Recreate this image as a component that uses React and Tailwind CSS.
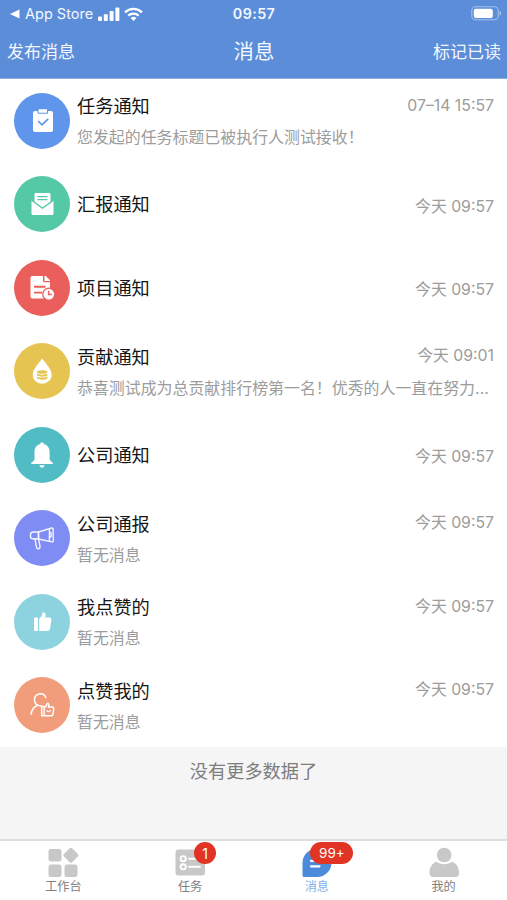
import React, { useState } from 'react';
import clsx from 'clsx';

const TaskIcon = () => (
  <svg width="56" height="56" viewBox="0 0 56 56" fill="none">
    <rect x="19" y="18" width="20" height="21" rx="2" fill="#fff" />
    <rect x="24" y="15.6" width="9.6" height="4.6" rx="1" fill="#fff" stroke="#5f95ea" strokeWidth="1.1" />
    <path d="M24.2 28l3.8 3.8 6.2-6" stroke="#5f95ea" strokeWidth="1.7" />
  </svg>
);

const ReportIcon = () => (
  <svg width="56" height="56" viewBox="0 0 56 56" fill="none">
    <path d="M20.5 26v-7.6c0-.8.6-1.4 1.4-1.4h13.2c.8 0 1.4.6 1.4 1.4V26l-8 5.5z" fill="#fff" />
    <path d="M23.5 20.6h10M23.5 23.6h10" stroke="#55c8a6" strokeWidth="1.3" />
    <path d="M17.5 24.2l11 8 11-8v13.3c0 .8-.7 1.5-1.5 1.5H19c-.8 0-1.5-.7-1.5-1.5z" fill="#fff" />
    <path d="M17.5 24.2l11 8 11-8" stroke="#55c8a6" strokeWidth="1.2" />
  </svg>
);

const ProjectIcon = () => (
  <svg width="56" height="56" viewBox="0 0 56 56" fill="none">
    <path d="M18.5 16H29v4.8c0 .9.6 1.5 1.500 1.500H36v14.200c0 1.100-.9 2-2 2H18.500c-1.100 0-2-.9-2-2V18c0-1.100.9-2 2-2z" fill="#fff" />
    <path d="M30.500 16h1.300l4.200 4.200v.8h-5.500z" fill="#fff" />
    <path d="M20 26.800h11.500M20 32.600h8" stroke="#ea5f5b" strokeWidth="1.900" />
    <circle cx="34.800" cy="34.200" r="6" fill="#fff" stroke="#ea5f5b" strokeWidth="1.300" />
    <path d="M34.600 30.800v3.700h3.200" stroke="#ea5f5b" strokeWidth="1.400" />
  </svg>
);

const ContributionIcon = () => (
  <svg width="56" height="56" viewBox="0 0 56 56" fill="none">
    <path d="M28.200 15.200c1.600 3.600 9.500 10 9.500 16.600 0 5-4.200 8.800-9.500 8.800s-9.500-3.800-9.500-8.800c0-6.600 7.900-13 9.500-16.600z" fill="#fff" />
    <ellipse cx="28.200" cy="29" rx="5.200" ry="1.800" fill="#e6c452" />
    <path d="M23 30.500c1 1.500 9.400 1.500 10.400 0v2.100c-1 1.600-9.400 1.600-10.400 0zM23 33.400c1 1.500 9.400 1.500 10.400 0v2.100c-1 1.600-9.400 1.600-10.400 0z" fill="#e6c452" />
  </svg>
);

const BellIcon = () => (
  <svg width="56" height="56" viewBox="0 0 56 56" fill="#fff">
    <path d="M28 15.200c1.100 0 1.800.8 1.900 1.900 3.600 1 5.700 4 5.700 7.800v6.500c0 2 1.500 3.100 3 4 .7.5.5 1.500-.4 1.500H17.900c-.9 0-1.100-1-.4-1.500 1.500-.9 3-2 3-4v-6.500c0-3.800 2.100-6.800 5.700-7.800.1-1.100.7-1.900 1.800-1.900z" />
    <path d="M25.400 38.200h5.200c-.3 1.500-1.200 2.300-2.600 2.300s-2.300-.8-2.600-2.300z" />
  </svg>
);

const MegaphoneIcon = () => (
  <svg width="56" height="56" viewBox="0 0 56 56" fill="none" stroke="#fff" strokeOpacity=".9" strokeWidth="1.400" strokeLinejoin="round" strokeLinecap="round">
    <path d="M24.500 22L37.500 18c.9-.2 1.500.2 1.600 1l.2 11.600c0 .9-.6 1.400-1.500 1.300l-13.300-2.900z" />
    <path d="M24.500 22h-5.600c-1.500.1-2.400 1.100-2.400 2.500v2c0 1.400 1.100 2.300 2.500 2.300l5.500.2z" />
    <path d="M21 29l1.400 8c.2 1.200 1.100 1.900 2.200 1.700 1.100-.2 1.600-1.200 1.400-2.300L24.600 29M35.400 18.800v12.400" />
    <path d="M35.600 22.300c2.200 0 2.200 5 0 5" />
  </svg>
);

const LikeIcon = () => (
  <svg width="56" height="56" viewBox="0 0 56 56" fill="#fff">
    <rect x="20" y="23.500" width="4" height="13.500" rx="1" />
    <path d="M25.200 24.500c1.900-1.200 2.700-2.500 3-4.500.1-1.100.8-1.800 1.700-1.700 1.600.2 2.300 2 1.300 5.200h4.300c1.300 0 2.100 1.100 1.900 2.500l-1.300 8.600c-.3 1.500-1.100 2.400-2.400 2.400h-8.500z" />
  </svg>
);

const LikedMeIcon = () => (
  <svg width="56" height="56" viewBox="0 0 56 56" fill="none" stroke="#fff" strokeWidth="1.500" strokeLinecap="round" strokeLinejoin="round">
    <path d="M31.800 20.500a5.900 5.900 0 1 0-6 8.200h1.200" />
    <path d="M23.600 28.200c-3.600 1.300-5.800 4.400-6.600 9" />
    <path d="M27.700 29.600h2.500v9.200h-2.500zM30.200 30.400c1.800-.7 2.500-1.700 2.700-3.200.2-1 1.800-.8 2 .5.100.9-.1 1.500-.5 2.300h3.700c1.200 0 1.800.8 1.600 1.900l-.7 5.200c-.2 1.200-.8 1.700-1.800 1.700h-7" />
    <path d="M32.800 33.400c.6 1.800 3.200 1.800 3.700 0" strokeWidth="1.100" />
  </svg>
);

const messages = [
  { id: 1, title: '任务通知', desc: '您发起的任务标题已被执行人测试接收！', time: '07–14 15:57', color: 'bg-[#5f95ea]', icon: TaskIcon },
  { id: 2, title: '汇报通知', time: '今天 09:57', color: 'bg-[#55c8a6]', icon: ReportIcon },
  { id: 3, title: '项目通知', time: '今天 09:57', color: 'bg-[#ea5f5b]', icon: ProjectIcon },
  { id: 4, title: '贡献通知', desc: '恭喜测试成为总贡献排行榜第一名！优秀的人一直在努力...', time: '今天 09:01', color: 'bg-[#e6c452]', icon: ContributionIcon },
  { id: 5, title: '公司通知', time: '今天 09:57', color: 'bg-[#52bcc4]', icon: BellIcon },
  { id: 6, title: '公司通报', desc: '暂无消息', time: '今天 09:57', color: 'bg-[#7f8cf3]', icon: MegaphoneIcon },
  { id: 7, title: '我点赞的', desc: '暂无消息', time: '今天 09:57', color: 'bg-[#8dd2df]', icon: LikeIcon },
  { id: 8, title: '点赞我的', desc: '暂无消息', time: '今天 09:57', color: 'bg-[#f19d7b]', icon: LikedMeIcon }
];

const WorkbenchTab = () => (
  <svg width="32" height="32" viewBox="0 0 32 32" fill="currentColor">
    <rect x="1.500" y="3" width="13" height="12.500" rx="2.500" />
    <rect x="18.100" y="3.500" width="11.600" height="11.600" rx="1.800" transform="rotate(45 23.900 9.300)" />
    <rect x="1.500" y="18.500" width="13" height="12.500" rx="2.500" />
    <rect x="17.500" y="18.500" width="13" height="12.500" rx="2.500" />
  </svg>
);

const TaskTab = () => (
  <svg width="32" height="32" viewBox="0 0 32 32" fill="none">
    <rect x="1.500" y="3.500" width="29.500" height="26" rx="3" fill="currentColor" />
    <g stroke="#fff" strokeWidth="1.900">
      <circle cx="9.200" cy="12.700" r="2.600" />
      <circle cx="9.200" cy="20.800" r="2.600" />
      <path d="M15 12.700h11M15 20.800h11" strokeLinecap="round" />
    </g>
  </svg>
);

const MessageTab = () => (
  <svg width="32" height="32" viewBox="0 0 32 32" fill="none">
    <path d="M16 2.500c8 0 14.500 6.300 14.500 14.200S24 31 16 31H3c-.9 0-1.500-.6-1.500-1.500V16.700C1.500 8.800 8 2.500 16 2.500z" fill="currentColor" />
    <path d="M10 14.800h7M10 20.300h8.500" stroke="#fff" strokeWidth="2.200" strokeLinecap="round" />
  </svg>
);

const MineTab = () => (
  <svg width="32" height="32" viewBox="0 0 32 32" fill="currentColor">
    <circle cx="16.200" cy="9" r="7.300" />
    <path d="M8.300 15.800c4.600 3.100 11.200 3.100 15.800 0 4.400 1.800 7 5.600 7 11.500 0 2.400-1.300 3.700-3.700 3.700H5.200c-2.400 0-3.700-1.300-3.700-3.700 0-5.900 2.500-9.700 6.800-11.500z" />
  </svg>
);

const tabs = [
  { key: 'work', label: '工作台', icon: WorkbenchTab },
  { key: 'task', label: '任务', icon: TaskTab, badge: '1' },
  { key: 'message', label: '消息', icon: MessageTab, badge: '99+' },
  { key: 'mine', label: '我的', icon: MineTab }
];

const StatusBar = () => (
  <div className="grid grid-cols-3 items-center h-[27px] pl-[9px] pr-[5px]">
    <div className="flex items-center">
      <svg className="shrink-0" width="11" height="10" viewBox="0 0 11 10" fill="#fff">
        <path d="M1 5l9.500-4.500v9z" />
      </svg>
      <span className="ml-[5px] text-[14.500px] leading-5 whitespace-nowrap">App Store</span>
      <svg className="ml-[5px] shrink-0" width="22" height="14" viewBox="0 0 22 14" fill="#fff">
        <rect x="0" y="9.500" width="4" height="4.500" rx="1" />
        <rect x="5.800" y="7.300" width="4" height="6.700" rx="1" />
        <rect x="11.600" y="4" width="4" height="10" rx="1" />
        <rect x="17.400" y="0.500" width="4" height="13.500" rx="1" />
      </svg>
      <svg className="ml-[4px] shrink-0" width="19" height="14" viewBox="0 0 19 14" fill="none" stroke="#fff" strokeWidth="2.400">
        <path d="M1 5.300a12.200 12.200 0 0 1 17 0" />
        <path d="M4.300 8.700a7.500 7.500 0 0 1 10.400 0" />
        <path d="M9.500 14l-2.900-2.900a4.200 4.200 0 0 1 5.800 0z" fill="#fff" stroke="none" />
      </svg>
    </div>
    <div className="-ml-[3px] text-center text-[14.300px] leading-5 font-semibold tracking-[0.400px]">09:57</div>
    <svg className="justify-self-end" width="31" height="15" viewBox="0 0 31 15" fill="none">
      <rect x="0.800" y="0.800" width="26.500" height="13" rx="3.800" stroke="#fff" strokeOpacity=".45" strokeWidth="1.100" />
      <rect x="2.800" y="2.700" width="19" height="9.200" rx="2" fill="#fff" />
      <path d="M28.600 5v4.600c1-.4 1.600-1.300 1.600-2.300S29.600 5.400 28.600 5z" fill="#fff" fillOpacity=".5" />
    </svg>
  </div>
);

const MessageRow = ({ item }) => {
  const Icon = item.icon;
  return (
    <li className="flex items-center h-[83.500px] pl-[14px] pr-[13px]">
      <div className={clsx('size-14 rounded-full shrink-0', item.color)}>
        <Icon />
      </div>
      <div className={clsx('ml-[7px] flex-1 min-w-0', item.desc ? 'pt-[3px]' : 'pt-px')}>
        <div className="flex justify-between items-center">
          <h2 className="text-[18.200px] leading-[31px] text-[#151515]">{item.title}</h2>
          <time className={clsx('text-[15.800px] leading-[27px] text-[#9c9c9c]', item.desc ? 'pb-[3px]' : 'pt-[3px]')}>{item.time}</time>
        </div>
        {item.desc && (
          <p className="text-[15.930px] leading-[31px] text-[#9c9c9c] whitespace-nowrap">{item.desc}</p>
        )}
      </div>
    </li>
  );
};

const App = () => {
  const [active, setActive] = useState('message');

  return (
    <div className="flex flex-col h-screen overflow-hidden bg-[#f5f5f5] font-['Inter','Noto_Sans_CJK_SC',sans-serif]">
      {/* Header */}
      <header className="h-[79px] shrink-0 bg-[#5b8dd9] border-b border-[#8fb0e3] text-[#f3f8ff]">
        <StatusBar />
        <div className="grid grid-cols-3 items-center h-[50px] pl-[7px] pr-[6px]">
          <button className="justify-self-start text-[17px] leading-6">发布消息</button>
          <h1 className="text-center text-[20.400px] leading-7">消息</h1>
          <button className="justify-self-end text-[17px] leading-6">标记已读</button>
        </div>
      </header>

      <main className="flex-1 min-h-0">
        <ul className="bg-white">
          {messages.map((item) => (
            <MessageRow key={item.id} item={item} />
          ))}
        </ul>
        <p className="pt-[10px] text-center text-[18.200px] leading-7 text-[#7d7d7d]">没有更多数据了</p>
      </main>

      {/* Tab bar */}
      <nav className="grid grid-cols-4 h-[61px] shrink-0 bg-white border-t-2 border-[#dedede]">
        {tabs.map((tab) => {
          const Icon = tab.icon;
          const selected = active === tab.key;
          return (
            <button key={tab.key} onClick={() => setActive(tab.key)} className="flex flex-col items-center pt-[5px]">
              <span className={clsx('relative', selected ? 'text-[#4c8adb]' : 'text-[#c8c8c8]')}>
                <Icon />
                {tab.badge && (
                  <span
                    className={clsx(
                      'absolute -top-[4px] h-[22px] rounded-full bg-[#e23424] text-white leading-[23px]',
                      tab.badge.length > 1 ? 'left-[9px] w-[43px] pl-px text-[13.500px]' : 'left-[20px] w-[22px] text-[14px]'
                    )}
                  >
                    {tab.badge}
                  </span>
                )}
              </span>
              <span className={clsx('mt-px text-[12.200px] leading-4', selected ? 'text-[#7fb0e8]' : 'text-[#808080]')}>
                {tab.label}
              </span>
            </button>
          );
        })}
      </nav>
    </div>
  );
};

export default App;
